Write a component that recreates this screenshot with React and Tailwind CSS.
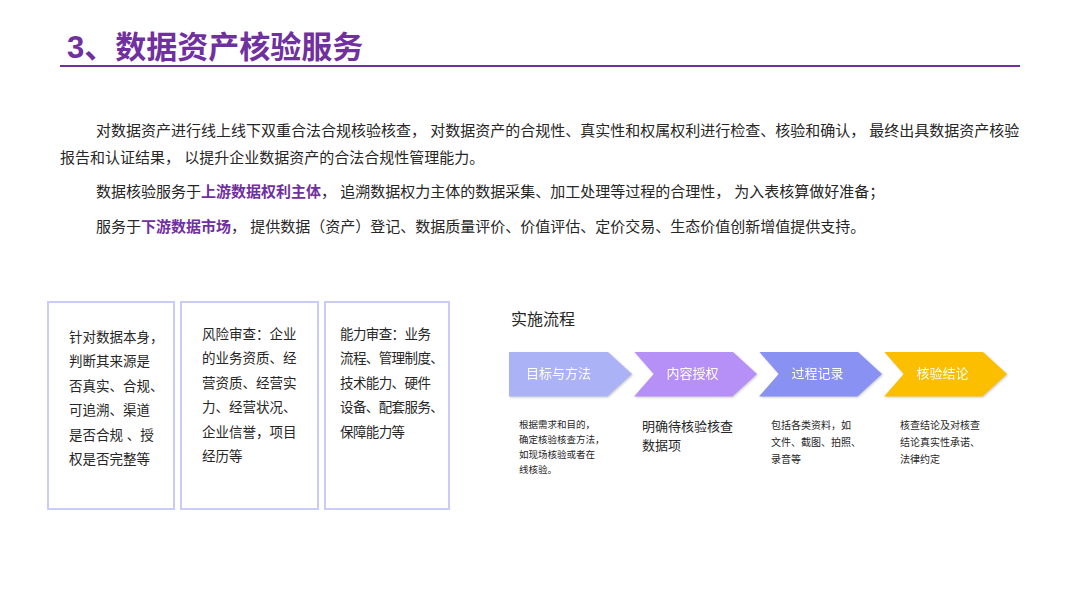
const F = { fontFamily: '"Liberation Sans","Noto Sans CJK SC",sans-serif' };

const steps = [
  { t: "目标与方法", c: "bg-[#abb3f6]", first: true, d: "根据需求和目的，\n确定核验核查方法，\n如现场核验或者在\n线核验。", ds: "text-[9.5px] leading-[15px] pl-[10px]" },
  { t: "内容授权", c: "bg-[#b690f6]", d: "明确待核验核查\n数据项", ds: "text-[13px] leading-[19px] pl-[8px]" },
  { t: "过程记录", c: "bg-[#8991f2]", d: "包括各类资料，如\n文件、截图、拍照、\n录音等", ds: "text-[10px] leading-[17px] pl-[12px]" },
  { t: "核验结论", c: "bg-[#fbbf00]", d: "核查结论及对核查\n结论真实性承诺、\n法律约定", ds: "text-[10px] leading-[17px] pl-[16px]" },
];

const boxes = [
  { w: "w-[128px]", pl: "pl-[20px]", t: "针对数据本身，\n判断其来源是\n否真实、合规、\n可追溯、渠道\n是否合规 、授\n权是否完整等", mt: "mt-[23px]" },
  { w: "w-[139px]", pl: "pl-[20px]", t: "风险审查：企业\n的业务资质、经\n营资质、经营实\n力、经营状况、\n企业信誉，项目\n经历等", mt: "mt-[20px]" },
  { w: "w-[126px]", pl: "pl-[14px]", t: "能力审查：业务\n流程、管理制度、\n技术能力、硬件\n设备、配套服务、\n保障能力等", mt: "mt-[20px]", tight: true },
];

export default function App() {
  return (
    <div className="w-[1080px] h-[608px] bg-white relative overflow-hidden text-[#262626]" style={F}>
      <div className="pl-[67px] pt-[28px] text-[31px] leading-[40px] font-bold text-[#7030a0]">3、数据资产核验服务</div>
      <div className="ml-[60px] w-[960px] h-[1.5px] bg-[#7030a0] mt-[-3px]" />
      <div className="pl-[60px] pr-[55px] mt-[50px] text-[15px] leading-[27px]">
        <p className="indent-[36px]">对数据资产进行线上线下双重合法合规核验核查， 对数据资产的合规性、真实性和权属权利进行检查、核验和确认， 最终出具数据资产核验报告和认证结果， 以提升企业数据资产的合法合规性管理能力。</p>
        <p className="indent-[36px] mt-[7px]">数据核验服务于<b className="text-[#7030a0]">上游数据权利主体</b>， 追溯数据权力主体的数据采集、加工处理等过程的合理性， 为入表核算做好准备；</p>
        <p className="indent-[36px] mt-[8px]">服务于<b className="text-[#7030a0]">下游数据市场</b>， 提供数据（资产）登记、数据质量评价、价值评估、定价交易、生态价值创新增值提供支持。</p>
      </div>
      <div className="flex mt-[61px] pl-[47px]">
        <div className="flex gap-[5px]">
          {boxes.map((b, i) => (
            <div key={i} className={`${b.w} h-[209px] border-2 border-[#c9cbf8] ${b.pl} text-[13.5px] leading-[24.5px] whitespace-pre overflow-hidden`}>
              <div className={`${b.mt} ${b.tight ? "tracking-[-0.6px]" : ""}`}>{b.t}</div>
            </div>
          ))}
        </div>
        <div className="ml-[59px] mt-[7px]">
          <div className="text-[16px] leading-[24px] pl-[2px]">实施流程</div>
          <div className="flex mt-[20px] gap-[2px]">
            {steps.map((s, i) => (
              <div key={i} className="w-[123px]">
                <div className="drop-shadow-[1px_1px_1px_rgba(0,0,0,0.2)]">
                  <div className={`${s.c} h-[45px] flex items-center justify-center text-white text-[13px] ${s.first ? "[clip-path:polygon(0_0,80%_0,100%_50%,80%_100%,0_100%)] pr-[24px]" : "[clip-path:polygon(0_0,80%_0,100%_50%,80%_100%,0_100%,16%_50%)] pr-[6px]"}`}>{s.t}</div>
                </div>
                <div className={`mt-[20px] whitespace-pre-line ${s.ds}`}>{s.d}</div>
              </div>
            ))}
          </div>
        </div>
      </div>
    </div>
  );
}
